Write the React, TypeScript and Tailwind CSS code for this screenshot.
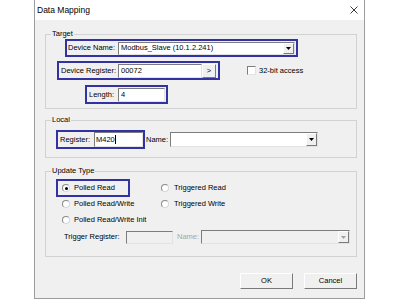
import React from "react";

const BLUE = "border-2 border-[#3232a2]";
const SUNKEN =
  "border border-t-[#7c7c7c] border-l-[#7c7c7c] border-r-[#e2e2e2] border-b-[#e2e2e2]";
const RAISED =
  "border border-t-white border-l-white border-r-[#7a7a7a] border-b-[#7a7a7a]";

function DropButton({ disabled = false }: { disabled?: boolean }) {
  return (
    <div
      className={`w-[11px] h-full flex items-center justify-center bg-[#f0f0f0] ${RAISED}`}
    >
      <svg width="5" height="3" viewBox="0 0 5 3">
        <path d="M0 0h5L2.5 3z" fill={disabled ? "#a0a0a0" : "#000"} />
      </svg>
    </div>
  );
}

function Combo({
  width,
  height,
  text,
  disabled = false,
}: {
  width: string;
  height: string;
  text?: string;
  disabled?: boolean;
}) {
  return (
    <div
      className={`${width} ${height} ${SUNKEN} ${
        disabled ? "bg-[#f0f0f0]" : "bg-white"
      } flex items-stretch`}
    >
      <div className="flex-1 flex items-center pl-[2px] whitespace-nowrap">
        {text}
      </div>
      <DropButton disabled={disabled} />
    </div>
  );
}

function Radio({ checked = false }: { checked?: boolean }) {
  return (
    <div className="w-[8px] h-[8px] rounded-full bg-white border border-[#8a8a8a] border-b-[#d8d8d8] border-r-[#d8d8d8] flex items-center justify-center shrink-0">
      {checked && <div className="w-[3px] h-[3px] rounded-full bg-black" />}
    </div>
  );
}

function Group({
  title,
  className,
  children,
}: {
  title: string;
  className: string;
  children: React.ReactNode;
}) {
  return (
    <fieldset
      className={`ml-[10px] w-[312px] min-w-0 border border-[#d2d2d2] ${className}`}
    >
      <legend className="ml-[5px] px-[1px] leading-[10px] text-[7.5px]">
        {title}
      </legend>
      {children}
    </fieldset>
  );
}

export default function App() {
  return (
    <div className="w-[400px] h-[300px] bg-white font-['Liberation_Sans',Arial,sans-serif] text-[7.5px] text-black overflow-hidden">
      <div className="ml-[34px] w-[331px] h-[299px] border-l border-r border-b border-[#9c9c9c] flex flex-col">
        {/* title bar */}
        <div className="h-[20px] bg-white flex items-center justify-between pl-[2px] pr-[6px]">
          <span className="text-[8.5px] leading-none">Data Mapping</span>
          <svg width="8" height="8" viewBox="0 0 8 8">
            <path d="M0.5 0.5l7 7M7.5 0.5l-7 7" stroke="#222" strokeWidth="0.9" />
          </svg>
        </div>

        <div className="flex-1 bg-[#f0f0f0] flex flex-col">
          <Group title="Target" className="mt-[9px] pb-[4px]">
            <div
              className={`ml-[19px] w-[233px] h-[18px] ${BLUE} flex items-center justify-between pl-[1px] pr-[1px]`}
            >
              <span>Device Name:</span>
              <Combo width="w-[177px]" height="h-[13px]" text="Modbus_Slave (10.1.2.241)" />
            </div>

            <div className="mt-[4px] flex items-center">
              <div
                className={`ml-[11px] w-[163px] h-[19px] ${BLUE} flex items-center justify-between pl-[2px] pr-[2px]`}
              >
                <span>Device Register:</span>
                <div className="flex h-[14px]">
                  <div className={`w-[84px] h-full bg-white ${SUNKEN} flex items-center pl-[2px]`}>
                    00072
                  </div>
                  <div className={`w-[14px] h-full bg-[#f0f0f0] ${RAISED} flex items-center justify-center`}>
                    &gt;
                  </div>
                </div>
              </div>
              <div className={`ml-[27px] w-[9px] h-[9px] bg-white ${SUNKEN}`} />
              <span className="ml-[3px]">32-bit access</span>
            </div>

            <div
              className={`mt-[5px] ml-[39px] w-[83px] h-[19px] ${BLUE} flex items-center justify-between pl-[2px] pr-[1px]`}
            >
              <span>Length:</span>
              <div className={`w-[47px] h-[14px] bg-white ${SUNKEN} flex items-center pl-[2px]`}>
                4
              </div>
            </div>
          </Group>

          <Group title="Local" className="mt-[6px] pb-[8px]">
            <div className="mt-[5px] flex items-center">
              <div
                className={`ml-[10px] w-[89px] h-[19px] ${BLUE} flex items-center justify-between pl-[2px]`}
              >
                <span>Register:</span>
                <div className={`w-[49px] h-[15px] bg-white ${SUNKEN} flex items-center pl-[1px]`}>
                  M420
                  <span className="w-px h-[9px] bg-black" />
                </div>
              </div>
              <span className="ml-[1px] w-[24px]">Name:</span>
              <Combo width="w-[148px]" height="h-[15px]" />
            </div>
          </Group>

          <Group title="Update Type" className="mt-[8px] pb-[12px]">
            <div className="mt-[3px] flex items-center">
              <div className="w-[115px] shrink-0">
                <div className={`ml-[10px] w-[74px] h-[18px] ${BLUE} flex items-center pl-[4px]`}>
                  <Radio checked />
                  <span className="ml-[4px]">Polled Read</span>
                </div>
              </div>
              <Radio />
              <span className="ml-[5px]">Triggered Read</span>
            </div>

            <div className="h-[14px] flex items-center">
              <div className="w-[115px] shrink-0 flex items-center pl-[16px]">
                <Radio />
                <span className="ml-[4px]">Polled Read/Write</span>
              </div>
              <Radio />
              <span className="ml-[5px]">Triggered Write</span>
            </div>

            <div className="mt-[2px] h-[14px] flex items-center pl-[16px]">
              <Radio />
              <span className="ml-[4px]">Polled Read/Write Init</span>
            </div>

            <div className="mt-[3px] h-[14px] flex items-center pl-[18px]">
              <span className="w-[62px]">Trigger Register:</span>
              <div className={`w-[47px] h-[13px] bg-[#f0f0f0] ${SUNKEN}`} />
              <span className="ml-[4px] w-[24px] text-[#a6a6a6]">Name:</span>
              <Combo width="w-[149px]" height="h-[14px]" disabled />
            </div>
          </Group>

          <div className="mt-[16px] flex justify-end gap-[11px] pr-[7px]">
            <button className={`w-[53px] h-[16px] bg-[#f0f0f0] ${RAISED} flex items-center justify-center text-[7.5px]`}>
              OK
            </button>
            <button className={`w-[53px] h-[16px] bg-[#f0f0f0] ${RAISED} flex items-center justify-center text-[7.5px]`}>
              Cancel
            </button>
          </div>
        </div>
      </div>
    </div>
  );
}
